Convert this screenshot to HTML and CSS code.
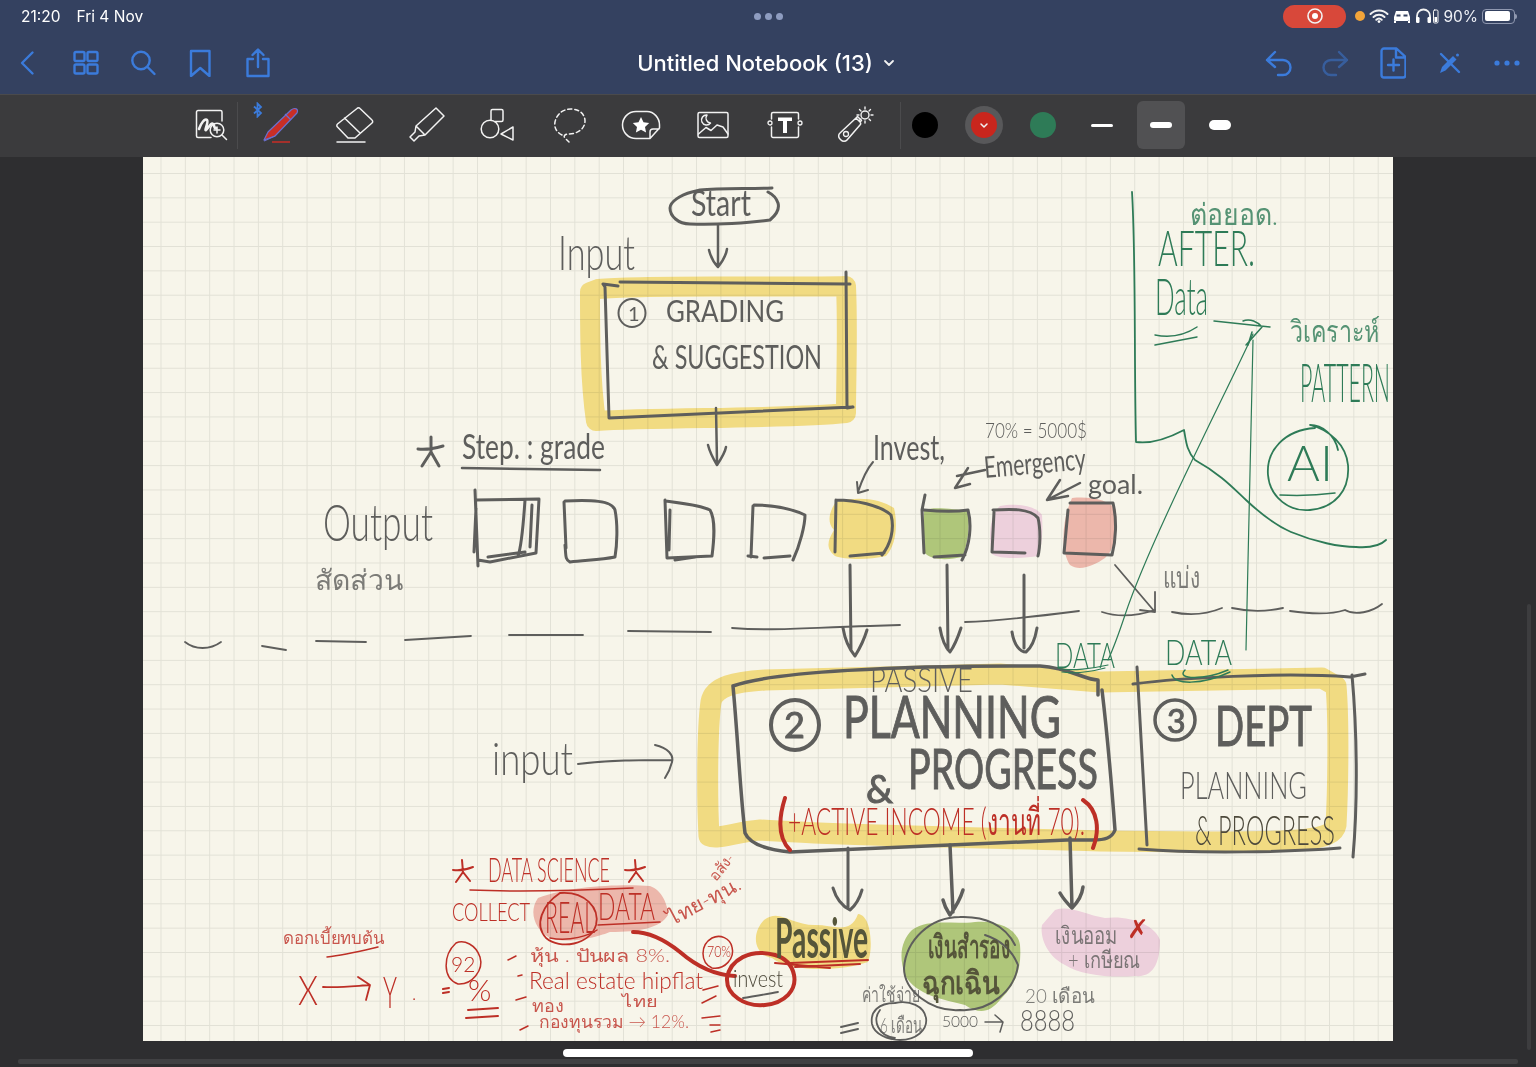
FILE: index.html
```html
<!DOCTYPE html>
<html lang="en">

<head>
  <meta charset="UTF-8">
  <meta name="viewport" content="width=device-width, initial-scale=1.0">
  <title>Untitled Notebook (13)</title>
  <link rel="stylesheet" href="styles.css">
</head>

<body>
  <div class="app">
    <div class="top-area">
      <div class="status-bar">
        <div class="status-left">
          <span>21:20</span>
          <span>Fri 4 Nov</span>
        </div>
        <div class="status-dots"><i></i><i></i><i></i></div>
        <div class="status-right">
          <div class="record-pill">
            <svg width="18" height="18" viewBox="0 0 18 18">
              <circle cx="9" cy="9" r="7" class="ico-white" stroke-width="1.6" />
              <circle cx="9" cy="9" r="3" fill="#fff" />
            </svg>
          </div>
          <span class="orange-dot"></span>
          <svg width="20" height="14" viewBox="0 0 20 14">
            <path d="M1.5 5a12 12 0 0 1 17 0M4.5 8a8 8 0 0 1 11 0M7.3 10.7a4 4 0 0 1 5.4 0" class="ico-white" stroke-width="2" />
            <circle cx="10" cy="12.6" r="1.4" fill="#fff" />
          </svg>
          <svg width="18" height="13" viewBox="0 0 18 13">
            <path d="M3 1h12l2 6v4H1V7z M1 10.5v2.5h2v-2 M15 10.5v2.5h2v-2" fill="#fff" />
            <path d="M3.5 6.5h4v-2h-4zM10.5 6.5h4v-2h-4z" fill="#344160" />
          </svg>
          <svg width="24" height="16" viewBox="0 0 24 16">
            <path d="M2 13V8a6.5 6.5 0 0 1 13 0v5" class="ico-white" stroke-width="1.8" />
            <rect x="1" y="9" width="3.5" height="6" rx="1.2" fill="#fff" />
            <rect x="12.5" y="9" width="3.5" height="6" rx="1.2" fill="#fff" />
            <rect x="18.5" y="2" width="4.5" height="13" rx="1.2" class="ico-white" stroke-width="1" />
            <rect x="19.5" y="9" width="2.5" height="5" fill="#fff" />
          </svg>
          <span class="battery-text">90%</span>
          <div class="battery"><div class="battery-fill"></div></div>
        </div>
      </div>

      <div class="nav-bar">
        <div class="nav-group">
          <button class="nav-btn"><svg width="28" height="28" viewBox="0 0 28 28"><path d="M18.5 3.5 8 14l10.5 10.5" class="ico-blue" /></svg></button>
          <button class="nav-btn"><svg width="28" height="28" viewBox="0 0 28 28">
              <rect x="2.5" y="3" width="10" height="9" rx="1.5" class="ico-blue" /><rect x="15.5" y="3" width="10" height="9" rx="1.5" class="ico-blue" />
              <rect x="2.5" y="15.5" width="10" height="9" rx="1.5" class="ico-blue" /><rect x="15.5" y="15.5" width="10" height="9" rx="1.5" class="ico-blue" />
            </svg></button>
          <button class="nav-btn"><svg width="28" height="28" viewBox="0 0 28 28"><circle cx="12" cy="11.5" r="8.7" class="ico-blue" /><path d="M18.5 18l7 7" class="ico-blue" /></svg></button>
          <button class="nav-btn"><svg width="28" height="28" viewBox="1 0 28 28"><path d="M5 2h18.5v25l-9.25-8L5 27z" class="ico-blue" /></svg></button>
          <button class="nav-btn"><svg width="28" height="30" viewBox="0 0 28 30"><path d="M9 11H3.5v17h21V11H19M14 19V2M8.5 7 14 1.5 19.5 7" class="ico-blue" /></svg></button>
        </div>
        <div class="nav-title">
          <span>Untitled Notebook (13)</span>
          <svg width="12" height="8" viewBox="0 0 12 8"><path d="M2 2l4 4 4-4" class="ico-white" stroke-width="1.8" /></svg>
        </div>
        <div class="nav-group">
          <button class="nav-btn"><svg width="30" height="28" viewBox="-2 0 30 28"><path d="M11 3 3 11l8 7M3 11h16a7.5 7.5 0 0 1 0 15h-5" class="ico-blue" /></svg></button>
          <button class="nav-btn faded"><svg width="30" height="28" viewBox="0 0 30 28"><path d="M19 3l8 8-8 7M27 11H11a7.5 7.5 0 0 0 0 15h5" class="ico-blue" /></svg></button>
          <button class="nav-btn"><svg width="28" height="32" viewBox="-2 0 28 32"><path d="M4 1.5h12.5L25.5 10v18a2.5 2.5 0 0 1-2.5 2.5H4A2.5 2.5 0 0 1 1.5 28V4A2.5 2.5 0 0 1 4 1.5zM16 2v8.5h9M13.5 12.5v11M8 18h11" class="ico-blue" /></svg></button>
          <button class="nav-btn"><svg width="24" height="24" viewBox="0 0 24 24"><path d="M3 3l18 18" class="ico-blue" /><path d="M2 22l2-6 11-11 3.5 3.5L7.5 19.5z" fill="#3b7bdb" /><circle cx="19.5" cy="4" r="1.5" fill="#3b7bdb" /></svg></button>
          <button class="nav-btn"><svg width="26" height="6" viewBox="0 0 26 6"><circle cx="3" cy="3" r="2.6" fill="#3b7bdb" /><circle cx="13" cy="3" r="2.6" fill="#3b7bdb" /><circle cx="23" cy="3" r="2.6" fill="#3b7bdb" /></svg></button>
        </div>
      </div>
    </div>

    <div class="toolbar">
      <div class="tool tool-first">
        <svg width="34" height="32" viewBox="0 0 34 32">
          <path d="M27 12V3a1.5 1.5 0 0 0-1.5-1.5H3A1.5 1.5 0 0 0 1.5 3v24A1.5 1.5 0 0 0 3 28.5h13" class="ico-white" stroke-width="1.5" />
          <path d="M4 20c2-6 6-11 8-9s-3 11-1 10 5-8 7-6 1 5 3 4" class="ico-white" stroke-width="2.6" />
          <circle cx="22" cy="21" r="6.8" class="ico-white" stroke-width="1.5" />
          <path d="M27 26l4.5 4.5M22 18v6M19 21h6" class="ico-white" stroke-width="1.5" />
        </svg>
      </div>
      <div class="tool-sep"></div>
      <div class="tool tool-pen">
        <svg class="tool-bt" width="10" height="16" viewBox="0 0 10 16"><path d="M1 4.5l7 6.5-3.5 3.5V1.5L8 5 1 11.5" fill="none" stroke="#3b7bdb" stroke-width="1.8" /></svg>
        <svg width="40" height="38" viewBox="0 0 40 38">
          <path d="M3 34 7 26 30 4c4-3 8-1 6 3L14 30z" fill="#c92e26" stroke="#6a6fce" stroke-width="1.2" stroke-linejoin="round" />
          <path d="M24 8l6 6" stroke="#6a6fce" stroke-width="1.2" />
          <path d="M3 35 14 30" stroke="#6a6fce" stroke-width="1.2" />
          <path d="M11 36h18" stroke="#c92e26" stroke-width="1.5" />
        </svg>
      </div>
      <div class="tool">
        <svg width="40" height="38" viewBox="0 0 40 38">
          <path d="M25 2.5 37 14a2 2 0 0 1 0 3L20 32h-7L2.5 21a2 2 0 0 1 0-3L22 2.5a2 2 0 0 1 3 0zM9.5 12l15.5 15" class="ico-white" stroke-width="1.5" />
          <path d="M2 36h28" class="ico-white" stroke-width="1.5" />
        </svg>
      </div>
      <div class="tool">
        <svg width="38" height="38" viewBox="0 0 38 38">
          <path d="M28 2l8 8-19 19-9-9zM8 20l-1 6-5 5 4 4 5-5 6-1M2 31" class="ico-white" stroke-width="1.5" />
        </svg>
      </div>
      <div class="tool">
        <svg width="36" height="34" viewBox="0 0 36 34">
          <circle cx="10" cy="21" r="8.8" class="ico-white" stroke-width="1.5" />
          <path d="M11 12V3a1.5 1.5 0 0 1 1.5-1.5h9A1.5 1.5 0 0 1 23 3v9a1.5 1.5 0 0 1-1.5 1.5H15M33 19v13L21 26z" class="ico-white" stroke-width="1.5" />
        </svg>
      </div>
      <div class="tool">
        <svg width="34" height="36" viewBox="0 0 34 36">
          <path d="M9 28C3 25 1 20 2 15 4 6 11 2 18 2c8 0 14 5 14 12 0 8-8 13-16 13-4 0-6 2-4 4l4 4" class="ico-white" stroke-width="1.5" stroke-dasharray="4 3" />
        </svg>
      </div>
      <div class="tool">
        <svg width="40" height="30" viewBox="0 0 40 30">
          <path d="M29 28.5H15C7 28.5 1.5 22 1.5 15S7 1.5 15 1.5h11C33 1.5 38.5 8 38.5 15v3L29 28.5zM38 19h-6c-2 0-3 1-3 3v6" class="ico-white" stroke-width="1.5" />
          <path d="M20 7l2.5 5.2 5.7.7-4.2 4 1.1 5.6-5.1-2.800-5.100 2.800 1.100-5.600-4.200-4 5.700-.7z" fill="#fff" />
        </svg>
      </div>
      <div class="tool">
        <svg width="32" height="28" viewBox="0 0 32 28">
          <rect x="1" y="1.5" width="30" height="25" rx="1.5" class="ico-white" stroke-width="1.5" />
          <path d="M1.5 23 9 16.5l5 3 6-5.5 6 2 5 7" class="ico-white" stroke-width="1.5" />
          <path d="M10 4a5 5 0 1 0 3.5 8 5 5 0 0 1-3.5-8z" class="ico-white" stroke-width="1.5" />
        </svg>
      </div>
      <div class="tool">
        <svg width="36" height="28" viewBox="0 0 36 28">
          <path d="M4.5 8V3a1.5 1.5 0 0 1 1.5-1.5h24A1.5 1.5 0 0 1 31.5 3v5M4.5 16v9A1.5 1.5 0 0 0 6 26.5h24a1.5 1.5 0 0 0 1.5-1.5v-9" class="ico-white" stroke-width="1.5" />
          <circle cx="3" cy="12" r="2" class="ico-white" stroke-width="1.3" /><circle cx="33" cy="12" r="2" class="ico-white" stroke-width="1.3" />
          <path d="M11 6.5h14v3.5h-5V22h-4V10h-5z" fill="#fff" />
        </svg>
      </div>
      <div class="tool">
        <svg width="38" height="38" viewBox="0 0 38 38">
          <path d="M19 12l4 4a2 2 0 0 1 0 3L10 34a4 4 0 0 1-6 0l-1-1a4 4 0 0 1 0-6zM19 12l1.5-1.5 4 4L23 16" class="ico-white" stroke-width="1.5" />
          <circle cx="9" cy="28" r="2.5" class="ico-white" stroke-width="1.3" />
          <circle cx="28" cy="9" r="4" class="ico-white" stroke-width="1.4" />
          <path d="M28 1v2M28 15v2M36 9h-2M22 9h-2M33.5 3.5 32 5M24 13l-1.5 1.5M33.5 14.5 32 13M24 5 22.5 3.5" class="ico-white" stroke-width="1.4" />
        </svg>
      </div>
      <div class="tool-sep tool-sep-wide"></div>
      <div class="swatches">
        <div class="swatch-cell"><span class="swatch swatch-black"></span></div>
        <div class="swatch-cell">
          <span class="swatch swatch-red">
            <svg width="10" height="7" viewBox="0 0 10 7"><path d="M2 2l3 3 3-3" class="ico-white" stroke-width="1.5" /></svg>
          </span>
        </div>
        <div class="swatch-cell"><span class="swatch swatch-green"></span></div>
        <div class="swatch-cell"><span class="nib nib-thin"></span></div>
        <div class="swatch-cell is-selected"><span class="nib nib-mid"></span></div>
        <div class="swatch-cell"><span class="nib nib-thick"></span></div>
      </div>
    </div>

    <div class="stage">
      <div class="paper">
        <svg class="drawing" viewBox="143 157 1250 884" width="1250" height="884">
          <g class="marker">
            <path class="mk-yellow" stroke-width="20" d="M598 289C650 284 780 288 846 286C848 330 846 380 846 413C790 419 660 417 596 421C590 380 590 330 590 292Z" />
            <path class="mk-yellow" stroke-width="21" d="M709 836C707 800 707 730 711 702C714 686 735 682 765 680L1000 674L1100 682L1322 678L1336 686C1339 720 1338 790 1336 825C1333 841 1300 842 1200 842L1100 841C1000 838 850 836 760 830C735 832 718 840 709 836Z" />
            <path class="mk-yellow-fill" d="M764 920C780 908 790 925 815 925C835 925 850 935 858 914C872 915 873 950 868 962C840 972 790 972 772 958C755 955 750 935 764 920Z" />
            <path class="mk-yellow-fill" d="M836 502C855 496 880 498 894 508C898 525 896 545 886 556C870 560 845 560 835 556C825 548 828 540 834 530C826 522 830 510 836 502Z" />
            <path class="mk-green" d="M912 930C930 918 950 925 975 922C1000 920 1018 930 1020 945C1022 970 1015 985 1000 1000C990 1012 980 1015 965 1005C945 1000 915 995 905 975C898 955 902 940 912 930Z" />
            <path class="mk-green" d="M924 510C935 506 955 510 968 510C970 525 968 545 962 557C950 560 930 561 924 552Z" />
            <path class="mk-pink" d="M1055 910C1070 905 1085 915 1105 918C1130 915 1155 925 1160 940C1160 960 1155 978 1135 976C1110 978 1080 975 1065 965C1045 955 1040 935 1042 925Z" />
            <path class="mk-pink" d="M1000 506C1015 503 1035 505 1042 515C1043 530 1042 548 1038 556C1025 558 1000 560 992 554C988 535 990 515 1000 506Z" />
            <path class="mk-red" d="M1072 498C1090 496 1110 500 1116 510C1117 530 1116 548 1105 558C1095 565 1080 572 1070 565C1060 550 1062 520 1072 498Z" />
            <path class="mk-red" d="M538 898C570 886 620 884 650 886C662 890 668 905 668 915C660 928 640 932 610 932C600 936 570 945 550 938C535 930 528 912 538 898Z" />
          </g>

          <!-- flow chart: start and box 1 -->
          <g class="pen pen-grey">
            <path stroke-width="3" d="M700 190C720 188 750 189 772 188M692 192C680 195 670 202 670 208C670 216 678 224 690 224C715 225 750 223 770 220C776 215 780 210 778 203C776 197 772 194 768 192M692 192L700 190" />
            <path stroke-width="2.5" d="M718 225L718 265M709 250C711 258 715 264 718 267C722 262 726 256 727 249" />
            <path stroke-width="3" d="M620 282L847 284M846 272L847 408L853 407L609 418L605 287L603 284L618 286M843 284L850 284" />
            <path stroke-width="2.5" d="M716 408L717 462M708 445C710 453 714 460 717 465C721 459 725 453 726 447" />
            <ellipse cx="632" cy="313" rx="13.5" ry="14" stroke-width="2" />
            <path stroke-width="3" d="M418 449C426 450 436 448 443 446M431 437L431 452M431 452L422 466M431 452L439 466" />
            <path stroke-width="2.5" d="M462 468L600 470" />
          </g>

          <!-- output squares -->
          <g class="pen pen-grey" stroke-width="3">
            <path d="M475 490L478 566M476 500L539 499L536 553L490 562L478 560M474 552L476 508M525 500C524 515 522 545 518 556M532 505L530 547M488 557L525 552" />
            <path d="M564 502L566 548M565 501C590 500 612 500 615 510C618 525 617 545 615 557C600 560 585 560 570 562C565 560 566 555 565 545" />
            <path d="M665 500L667 558L712 556C714 540 716 520 710 510C700 505 680 503 665 501M670 510L669 550M675 560L695 557" />
            <path d="M753 506L751 557M748 556L757 557M764 558L790 556M793 560C800 545 805 525 805 515C790 508 770 505 754 505" />
            <path d="M836 500L835 552M836 500C855 500 880 505 891 515C895 530 890 545 882 555M850 556L884 553" />
            <path d="M925 495L922 510L924 553M924 510C935 511 955 512 968 510C972 525 970 545 962 560M934 557L965 555" />
            <path d="M993 510C1010 509 1030 508 1038 518C1041 530 1040 548 1038 556M994 512L992 552L1025 553" />
            <path d="M1070 503L1113 503C1117 520 1116 540 1112 555L1064 553L1068 510" />
          </g>

          <!-- arrows and the dashed divider -->
          <g class="pen pen-grey">
            <path stroke-width="3" d="M850 565L851 650M843 628C845 640 850 650 855 656C860 648 864 640 867 630" />
            <path stroke-width="3" d="M947 565L948 650M940 628C942 640 946 648 950 652C955 645 958 637 961 628" />
            <path stroke-width="3" d="M1024 575L1024 648M1012 632C1014 645 1020 652 1026 652C1031 648 1035 640 1037 628" />
            <path stroke-width="2" d="M873 462C866 470 862 480 858 492M857 482L858 493L868 490" />
            <path stroke-width="2.5" d="M985 470L957 476M968 468L955 488L970 484" />
            <path stroke-width="2.5" d="M1080 483L1047 500M1060 480L1047 500L1068 496" />
            <path stroke-width="1.8" d="M1115 565L1155 612M1155 592L1155 612L1140 610" />
            <path stroke-width="1.8" d="M185 642C195 650 210 650 221 642M262 646L286 650M316 641L366 642M405 640L471 636M509 635L583 635M628 631L711 632M732 628C770 631 800 628 870 626L900 625M965 622C1000 621 1040 616 1079 611M1102 612C1120 618 1140 615 1155 610M1172 612C1190 616 1205 615 1222 608M1232 608C1250 612 1265 612 1283 608M1290 611C1310 614 1330 615 1345 610M1345 610C1355 616 1372 612 1382 604" />
          </g>

          <!-- box 2 and box 3 -->
          <g class="pen pen-grey">
            <path stroke-width="3.5" d="M733 686C770 672 900 665 1040 666C1070 668 1085 680 1098 680M733 686C738 740 740 790 745 833C750 845 770 850 790 852L1067 840L1093 840C1105 840 1112 838 1115 830C1112 790 1108 740 1102 690M1098 680L1098 695" />
            <ellipse cx="795" cy="725" rx="24" ry="25" stroke-width="4" />
            <ellipse cx="1175" cy="720" rx="20" ry="20" stroke-width="3.5" />
            <path stroke-width="3" d="M1137 667L1147 845M1133 684C1180 678 1280 672 1350 677L1365 674M1352 675C1357 730 1358 800 1353 857M1139 849C1200 854 1290 852 1340 848" />
            <path stroke-width="3" d="M848 848L848 908M833 888C836 898 842 906 850 910C856 905 860 897 862 890" />
            <path stroke-width="3.5" d="M950 845L953 912M943 900C945 908 948 912 950 915C955 908 960 900 963 890" />
            <path stroke-width="3.5" d="M1070 838L1072 908M1060 893C1064 900 1068 904 1072 908C1078 902 1082 895 1083 887" />
          </g>
          <g class="pen pen-grey">
            <path stroke-width="2" d="M578 764C610 760 640 760 672 760M655 745C668 748 674 755 672 762C670 770 667 775 665 778" />
            <path stroke-width="2" d="M960 917C930 917 906 940 904 968C904 990 930 1012 960 1010C990 1012 1015 990 1018 965C1012 950 1000 940 985 935M960 917C985 916 1005 925 1015 945" />
            <path stroke-width="1.8" d="M895 1003C878 1003 870 1012 872 1024C874 1034 888 1040 900 1040C916 1040 928 1030 926 1018C924 1006 910 1000 895 1003M880 1010C872 1020 878 1036 895 1038" />
            <path stroke-width="2" d="M841 1027L858 1023M841 1033L858 1029" />
            <path stroke-width="1.5" d="M985 1022L1002 1022M995 1015L1003 1022L1000 1032" />
            <path stroke-width="1.8" d="M743 998C755 996 768 994 778 992" />
          </g>

          <!-- green ink -->
          <g class="pen pen-green">
            <path stroke-width="1.8" d="M1132 192C1136 260 1134 360 1136 442C1150 444 1165 440 1184 430C1186 440 1186 450 1195 460C1222 475 1235 490 1246 500C1262 515 1275 525 1291 532C1315 542 1340 547 1356 547C1370 548 1380 546 1386 540" />
            <path stroke-width="1.2" d="M1253 334C1225 395 1150 540 1125 615C1120 630 1115 645 1108 660" />
            <path stroke-width="1.2" d="M1253 340L1246 650" />
            <path stroke-width="1.5" d="M1214 321L1270 327M1243 321C1250 318 1258 322 1262 327L1246 345M1252 332L1248 345" />
            <path stroke-width="1.5" d="M1155 335C1170 338 1185 335 1197 327M1155 345L1197 337" />
            <path stroke-width="1.8" d="M1315 428C1285 430 1266 450 1268 475C1270 498 1290 512 1310 510C1335 508 1350 490 1348 465C1346 445 1330 430 1310 425C1322 425 1335 435 1338 450" />
            <path stroke-width="1.5" d="M1280 495C1300 496 1320 495 1335 493" />
            <path stroke-width="1.2" d="M1058 668C1070 672 1095 668 1108 665M1062 672C1075 674 1090 672 1105 668" />
            <path stroke-width="1.5" d="M1185 670C1175 680 1205 680 1228 670M1172 675C1175 684 1200 686 1230 672" />
          </g>

          <!-- red ink -->
          <g class="pen pen-red">
            <path stroke-width="4" d="M785 798C778 820 778 838 790 850M1083 800C1098 810 1100 830 1093 848" />
            <path stroke-width="1.5" d="M470 890C520 892 590 890 633 888M327 957C345 955 365 950 378 947M598 925L660 922M550 938C570 942 590 935 597 930" />
            <path stroke-width="2" d="M453 870C460 871 468 869 473 867M462 860L463 872L456 882M463 872L470 881M625 870C632 871 640 869 645 867M635 860L636 872L629 882M636 872L643 881" />
            <path stroke-width="1.8" d="M560 893C542 905 534 925 546 938C560 950 590 945 596 925C600 908 585 891 560 893" />
            <path stroke-width="4" d="M633 932C650 932 665 940 680 952C695 965 712 975 735 976" />
            <path stroke-width="4" d="M775 955C750 948 730 960 727 978C726 995 745 1007 765 1005C785 1003 797 990 794 975C792 965 785 958 775 955" />
            <path stroke-width="1.5" d="M712 938C700 945 700 962 712 968C725 970 735 958 732 947C730 938 720 934 712 938" />
            <path stroke-width="1.5" d="M456 943C443 955 442 978 458 984C472 985 484 970 480 957C476 945 464 939 456 943" />
            <path stroke-width="2" d="M468 1010L498 1008M466 1018L498 1016M443 989L449 988M443 993L449 992" />
            <path stroke-width="2" d="M790 963L868 960M795 967L860 964M775 963L830 968" />
            <path stroke-width="1.8" d="M323 987C340 988 355 986 370 985M358 977L370 985L366 1000" />
            <path stroke-width="1.5" d="M508 960L516 956M518 976L522 975M516 1000L526 997M520 1030L528 1026M703 990L718 986M702 1003L716 996M702 1018L720 1016M710 1025L720 1025M711 1032L720 1030" />
          </g>

          <!-- handwriting kept as text -->
          <g class="hand-thin">
            <text class="ink-grey" x="558" y="270" font-size="48" textLength="77" lengthAdjust="spacingAndGlyphs">Input</text>
            <text class="ink-grey" x="323" y="541" font-size="52" textLength="110" lengthAdjust="spacingAndGlyphs">Output</text>
            <text class="ink-grey thai-soft" x="315" y="590" font-size="28" textLength="88" lengthAdjust="spacingAndGlyphs">สัดส่วน</text>
            <text class="ink-grey" x="492" y="775" font-size="46" textLength="81" lengthAdjust="spacingAndGlyphs">input</text>
            <text class="ink-grey" x="870" y="692" font-size="33" textLength="103" lengthAdjust="spacingAndGlyphs">PASSIVE</text>
            <text class="ink-grey" x="1180" y="799" font-size="38" textLength="127" lengthAdjust="spacingAndGlyphs">PLANNING</text>
            <text class="ink-dark" x="1195" y="845" font-size="42" textLength="140" lengthAdjust="spacingAndGlyphs">&amp; PROGRESS</text>
            <text class="ink-grey" x="985" y="438" font-size="21" textLength="102" lengthAdjust="spacingAndGlyphs">70% = 5000$</text>
            <text class="ink-grey thai-soft" x="1163" y="588" font-size="30" textLength="37" lengthAdjust="spacingAndGlyphs">แบ่ง</text>
            <text class="ink-grey thai-soft" x="862" y="1002" font-size="20" textLength="58" lengthAdjust="spacingAndGlyphs">ค่าใช้จ่าย</text>
            <text class="ink-grey thai-soft" x="880" y="1033" font-size="22" textLength="42" lengthAdjust="spacingAndGlyphs">6 เดือน</text>
            <text class="ink-grey" x="942" y="1027" font-size="15" textLength="36" lengthAdjust="spacingAndGlyphs">5000</text>
            <text class="ink-grey" x="1020" y="1031" font-size="30" textLength="55" lengthAdjust="spacingAndGlyphs">8888</text>
            <text class="ink-grey thai-soft" x="1025" y="1003" font-size="20" textLength="70" lengthAdjust="spacingAndGlyphs">20 เดือน</text>
            <text class="ink-grey thai-soft" x="1055" y="944" font-size="24" textLength="62" lengthAdjust="spacingAndGlyphs">เงินออม</text>
            <text class="ink-grey thai-soft" x="1068" y="968" font-size="23" textLength="72" lengthAdjust="spacingAndGlyphs">+ เกษียณ</text>
            <text class="ink-dark" x="733" y="987" font-size="24" textLength="50" lengthAdjust="spacingAndGlyphs">invest</text>
          </g>

          <g class="hand-thin">
            <text class="ink-green thai-soft" x="1190" y="225" font-size="30" textLength="88" lengthAdjust="spacingAndGlyphs">ต่อยอด.</text>
            <text class="ink-green" x="1158" y="266" font-size="50" textLength="97" lengthAdjust="spacingAndGlyphs">AFTER.</text>
            <text class="ink-green" x="1155" y="315" font-size="52" textLength="53" lengthAdjust="spacingAndGlyphs">Data</text>
            <text class="ink-green thai-soft" x="1290" y="342" font-size="30" textLength="90" lengthAdjust="spacingAndGlyphs">วิเคราะห์</text>
            <text class="ink-green" x="1300" y="402" font-size="54" textLength="90" lengthAdjust="spacingAndGlyphs">PATTERN</text>
            <text class="ink-green" x="1287" y="481" font-size="50" textLength="46" lengthAdjust="spacingAndGlyphs">AI</text>
            <text class="ink-green" x="1055" y="668" font-size="36" textLength="60" lengthAdjust="spacingAndGlyphs">DATA</text>
            <text class="ink-green" x="1165" y="665" font-size="36" textLength="67" lengthAdjust="spacingAndGlyphs">DATA</text>
          </g>

          <g class="hand-regular">
            <text class="ink-grey" x="691" y="216" font-size="36" textLength="60" lengthAdjust="spacingAndGlyphs">Start</text>
            <text class="ink-grey" x="628" y="321" font-size="20">1</text>
            <text class="ink-grey" x="666" y="322" font-size="30" textLength="118" lengthAdjust="spacingAndGlyphs">GRADING</text>
            <text class="ink-grey" x="652" y="369" font-size="32" textLength="170" lengthAdjust="spacingAndGlyphs">&amp; SUGGESTION</text>
            <text class="ink-grey" x="462" y="459" font-size="34" textLength="143" lengthAdjust="spacingAndGlyphs">Step. : grade</text>
            <text class="ink-grey" x="873" y="460" font-size="34" textLength="72" lengthAdjust="spacingAndGlyphs">Invest,</text>
            <text class="ink-grey" x="985" y="478" font-size="30" textLength="102" lengthAdjust="spacingAndGlyphs" transform="rotate(-5 985 478)">Emergency</text>
            <text class="ink-grey" x="1088" y="494" font-size="26" textLength="55" lengthAdjust="spacingAndGlyphs">goal.</text>
            <text class="ink-heavy" x="784" y="738" font-size="36">2</text>
            <text class="ink-heavy" x="843" y="738" font-size="58" textLength="218" lengthAdjust="spacingAndGlyphs">PLANNING</text>
            <text class="ink-heavy" x="866" y="803" font-size="38">&amp;</text>
            <text class="ink-heavy" x="908" y="789" font-size="56" textLength="190" lengthAdjust="spacingAndGlyphs">PROGRESS</text>
            <text class="ink-heavy" x="1167" y="733" font-size="32">3</text>
            <text class="ink-heavy" x="1215" y="746" font-size="56" textLength="97" lengthAdjust="spacingAndGlyphs">DEPT</text>
            <text class="ink-olive" x="775" y="958" font-size="56" textLength="93" lengthAdjust="spacingAndGlyphs">Passive</text>
            <text class="ink-olive" x="928" y="958" font-size="32" textLength="82" lengthAdjust="spacingAndGlyphs">เงินสำรอง</text>
            <text class="ink-olive" x="922" y="994" font-size="32" textLength="78" lengthAdjust="spacingAndGlyphs">ฉุกเฉิน</text>
          </g>

          <g class="hand-thin">
            <text class="ink-red" x="788" y="835" font-size="38" textLength="297" lengthAdjust="spacingAndGlyphs">+ACTIVE INCOME (งานที่ 70).</text>
            <text class="ink-red" x="488" y="882" font-size="34" textLength="122" lengthAdjust="spacingAndGlyphs">DATA SCIENCE</text>
            <text class="ink-red" x="452" y="921" font-size="26" textLength="78" lengthAdjust="spacingAndGlyphs">COLLECT</text>
            <text class="ink-red" x="545" y="933" font-size="44" textLength="50" lengthAdjust="spacingAndGlyphs">REAL</text>
            <text class="ink-red" x="598" y="920" font-size="38" textLength="57" lengthAdjust="spacingAndGlyphs">DATA</text>
            <text class="ink-red thai-soft" x="283" y="944" font-size="17" textLength="102" lengthAdjust="spacingAndGlyphs">ดอกเบี้ยทบต้น</text>
            <text class="ink-red" x="298" y="1005" font-size="42" textLength="20" lengthAdjust="spacingAndGlyphs">X</text>
            <text class="ink-red" x="383" y="1008" font-size="44" textLength="14" lengthAdjust="spacingAndGlyphs">Y</text>
            <text class="ink-red" x="412" y="1000" font-size="18">.</text>
            <text class="ink-red" x="451" y="972" font-size="21">92</text>
            <text class="ink-red" x="468" y="1001" font-size="30">%</text>
            <text class="ink-red" x="707" y="957" font-size="15" textLength="24" lengthAdjust="spacingAndGlyphs">70%</text>
            <text class="ink-red thai-soft" x="530" y="962" font-size="18" textLength="140" lengthAdjust="spacingAndGlyphs">หุ้น . ปันผล 8%.</text>
            <text class="ink-red" x="529" y="989" font-size="24" textLength="174" lengthAdjust="spacingAndGlyphs">Real estate hipflat</text>
            <text class="ink-red thai-soft" x="532" y="1012" font-size="18" textLength="32" lengthAdjust="spacingAndGlyphs">ทอง</text>
            <text class="ink-red thai-soft" x="622" y="1007" font-size="15" textLength="36" lengthAdjust="spacingAndGlyphs">ไทย</text>
            <text class="ink-red thai-soft" x="539" y="1028" font-size="18" textLength="150" lengthAdjust="spacingAndGlyphs">กองทุนรวม → 12%.</text>
            <text class="ink-red thai-soft" x="672" y="926" font-size="20" textLength="80" lengthAdjust="spacingAndGlyphs" transform="rotate(-28 672 926)">ไทย-ทุน.</text>
            <text class="ink-red thai-soft" x="716" y="882" font-size="15" textLength="30" lengthAdjust="spacingAndGlyphs" transform="rotate(-50 716 882)">อสัง-</text>
            <text class="ink-red" x="1127" y="938" font-size="26">✗</text>
          </g>
        </svg>
      </div>
      <div class="scroll-v"></div>
      <div class="scroll-h"></div>
      <div class="home-bar"></div>
    </div>
  </div>
</body>

</html>
```

FILE: styles.css
```css
* {
  margin: 0;
  padding: 0;
  box-sizing: border-box;
}

body {
  font-family: Inter, 'Noto Sans', sans-serif;
  background: #2e2e30;
  color: #fff;
  overflow: hidden;
}

.app {
  width: 1536px;
  height: 1067px;
  display: flex;
  flex-direction: column;
}

.top-area {
  height: 94px;
  background: #344160;
}

/* status bar */
.status-bar {
  height: 32px;
  display: grid;
  grid-template-columns: 1fr auto 1fr;
  align-items: center;
  padding: 0 21px;
  font-size: 15.5px;
}

.status-left {
  display: flex;
  gap: 16px;
}

.status-dots {
  display: flex;
  gap: 4px;
}

.status-dots i {
  width: 7px;
  height: 7px;
  border-radius: 50%;
  background: #8e9cc0;
}

.status-right {
  display: flex;
  justify-content: flex-end;
  align-items: center;
  gap: 4px;
}

.record-pill {
  width: 63px;
  height: 23px;
  border-radius: 12px;
  background: #d8483a;
  display: flex;
  align-items: center;
  justify-content: center;
  margin-right: 5px;
}

.orange-dot {
  width: 10px;
  height: 10px;
  border-radius: 50%;
  background: #f2a43a;
}

.battery-text {
  color: #eef0f6;
}

.battery {
  width: 33px;
  height: 15px;
  border: 1px solid #8f98b0;
  border-radius: 4px;
  padding: 1.5px;
  position: relative;
}

.battery::after {
  content: "";
  position: absolute;
  right: -3px;
  top: 4px;
  width: 2px;
  height: 5px;
  background: #8f98b0;
  border-radius: 0 2px 2px 0;
}

.battery-fill {
  width: 90%;
  height: 100%;
  background: #fff;
  border-radius: 2px;
}

/* nav bar */
.nav-bar {
  height: 62px;
  display: grid;
  grid-template-columns: 1fr auto 1fr;
  align-items: center;
}

.nav-group {
  display: flex;
  align-items: center;
  gap: 17.5px;
}

.nav-group:first-child {
  padding-left: 8px;
}

.nav-group:last-child {
  justify-content: flex-end;
  padding-right: 9px;
}

.nav-btn {
  width: 40px;
  height: 40px;
  border: none;
  background: none;
  display: flex;
  align-items: center;
  justify-content: center;
}

.nav-btn.faded {
  opacity: 0.5;
}

.nav-title {
  display: flex;
  align-items: center;
  gap: 10px;
  font-size: 22px;
  font-weight: 500;
  padding-right: 4px;
}

.ico-blue {
  fill: none;
  stroke: #3b7bdb;
  stroke-width: 2.4;
  stroke-linecap: round;
  stroke-linejoin: round;
}

.ico-white {
  fill: none;
  stroke: #f2f2f2;
  stroke-linecap: round;
  stroke-linejoin: round;
}

/* tool bar */
.toolbar {
  height: 63px;
  background: #3b3b3d;
  border-top: 1px solid #4a4a4c;
  display: flex;
  align-items: center;
  padding-left: 188px;
  padding-bottom: 2px;
}

.tool {
  width: 60px;
  height: 48px;
  margin-right: 11.6px;
  display: flex;
  align-items: center;
  justify-content: center;
  position: relative;
}

.tool-first {
  width: 48px;
  margin-right: 1px;
}

.tool-pen {
  margin-right: 14px;
}

.tool-bt {
  position: absolute;
  left: 2px;
  top: 1px;
}

.tool-sep {
  width: 1px;
  height: 47px;
  background: #4b4b4d;
  margin-right: 13px;
}

.tool-sep-wide {
  margin-left: 2px;
  margin-right: 0;
}

.swatches {
  display: flex;
  gap: 11px;
}

.swatch-cell {
  width: 48px;
  height: 48px;
  border-radius: 6px;
  display: flex;
  align-items: center;
  justify-content: center;
}

.swatch-cell.is-selected {
  background: #515153;
}

.swatch {
  width: 26px;
  height: 26px;
  border-radius: 50%;
  display: flex;
  align-items: center;
  justify-content: center;
}

.swatch-black {
  background: #000;
}

.swatch-green {
  background: #2e7b57;
}

.swatch-red {
  background: #c9261d;
  box-shadow: 0 0 0 6px #58585a;
}

.nib {
  width: 22px;
  background: #fff;
  border-radius: 5px;
}

.nib-thin {
  height: 3px;
}

.nib-mid {
  height: 6px;
}

.nib-thick {
  height: 10px;
}

/* page area */
.stage {
  position: relative;
  flex: 1;
  background: #2e2e30;
}

.paper {
  position: absolute;
  left: 143px;
  top: 0;
  width: 1250px;
  height: 884px;
  background-color: #f7f5ea;
  background-image:
    linear-gradient(to right, #e2e1d6 1px, transparent 1px),
    linear-gradient(to bottom, #e2e1d6 1px, transparent 1px);
  background-size: 24.35px 24.35px;
  background-position: 17.5px 16px;
}

.drawing {
  display: block;
  overflow: visible;
}

.scroll-v {
  position: absolute;
  left: 1527px;
  top: 447px;
  width: 4px;
  height: 446px;
  border-radius: 2px;
  background: #3d3d3f;
}

.scroll-h {
  position: absolute;
  left: 18px;
  top: 902px;
  width: 1500px;
  height: 5px;
  border-radius: 2px;
  background: #414143;
}

.home-bar {
  position: absolute;
  left: 563px;
  top: 892px;
  width: 410px;
  height: 8px;
  border-radius: 4px;
  background: #fff;
}

/* drawing ink */
.marker {
  mix-blend-mode: multiply;
}

.mk-yellow {
  fill: none;
  stroke: #f9e48e;
  stroke-linejoin: round;
  stroke-linecap: round;
}

.mk-yellow-fill {
  fill: #f9e48e;
}

.mk-green {
  fill: #b5ce85;
}

.mk-pink {
  fill: #f5d9f0;
}

.mk-red {
  fill: #f4bfbb;
}

.pen {
  fill: none;
  stroke-linecap: round;
  stroke-linejoin: round;
}

.pen-grey {
  stroke: #5e5e5c;
}

.pen-green {
  stroke: #2e7b57;
}

.pen-red {
  stroke: #bd2f26;
}

.hand-thin {
  font-family: Lato, 'Noto Sans', sans-serif;
  font-weight: 300;
}

.hand-regular {
  font-family: Lato, 'Noto Sans', sans-serif;
  font-weight: 400;
}

/* the Thai fallback has no light cut, so it is toned down instead */
.thai-soft {
  opacity: 0.8;
}

.ink-grey {
  fill: #5e5e5c;
}

.ink-dark {
  fill: #4e4a3c;
}

.ink-heavy {
  fill: #5e5e5c;
  stroke: #5e5e5c;
  stroke-width: 1;
}

.ink-olive {
  fill: #55553a;
  font-weight: 700;
}

.ink-green {
  fill: #2e7b57;
}

.ink-red {
  fill: #bd2f26;
}
```
